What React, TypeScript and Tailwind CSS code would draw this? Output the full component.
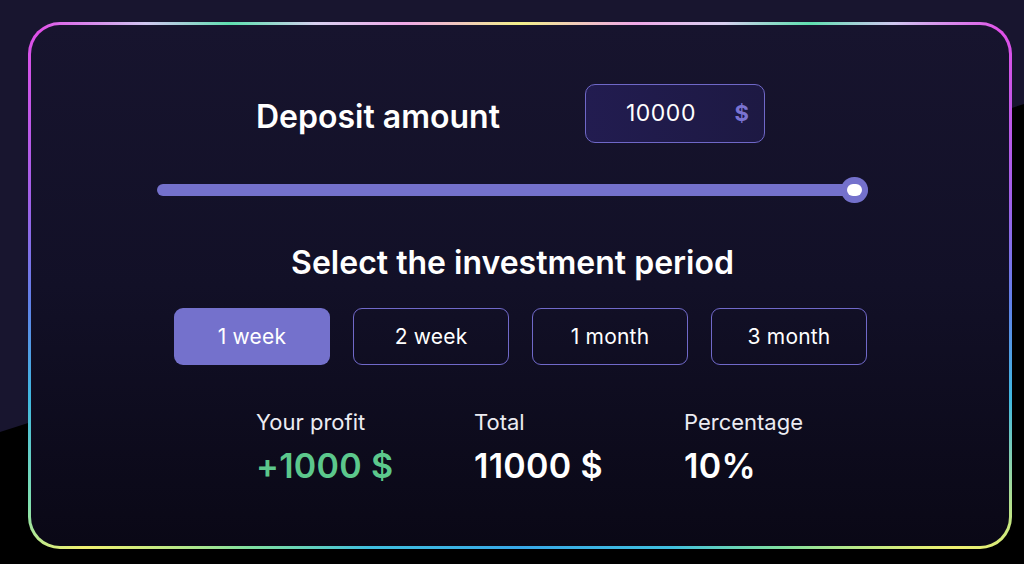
import { useState } from 'react';

// Periods offered by the calculator
const periods = ['1 week', '2 week', '1 month', '3 month'];

const font = "font-['Inter','Noto_Sans',sans-serif]";

export default function App() {
  const [active, setActive] = useState(0);

  return (
    <div className={`relative w-[1024px] h-[564px] overflow-hidden bg-[#18152f] ${font}`}>
      {/* dark backdrop shape behind the card */}
      <div className="absolute inset-0 bg-black [clip-path:polygon(0_432px,100%_104px,100%_100%,0_100%)]" />

      <div className="relative pt-[22px] pl-[28px]">
        <div className="w-[984px] h-[527px] p-[3px] rounded-[32px] bg-[conic-gradient(from_0deg_at_50%_50%,#f2f08a_0deg,#f0a8e8_24deg,#d8d0f0_38deg,#5fe0b0_48deg,#d0c8f0_55deg,#e050e8_62deg,#a060e8_80deg,#6080e8_92deg,#40b8e0_103deg,#c8e880_116deg,#f0f070_121deg,#80e0a0_135deg,#40c0e0_150deg,#38a8e8_180deg,#40c0e0_210deg,#80e0a0_226deg,#f0f070_239deg,#80e0b0_246deg,#40b8e0_257deg,#6080e8_268deg,#a060e8_280deg,#e050e8_298deg,#d0c8f0_305deg,#5fe0b0_312deg,#d8d0f0_322deg,#f0a8e8_336deg,#f2f08a_360deg)]">
          <div className="w-full h-full rounded-[29px] bg-[linear-gradient(180deg,#17142e_0%,#121027_50%,#0a0816_100%)] pt-[59px] pl-[126px]">
            <div className="w-[711px] flex flex-col">
              {/* deposit */}
              <div className="flex items-center pl-[99px]">
                <div className="w-[329px] pt-[6px] text-[32px] leading-[38px] font-semibold text-white">
                  Deposit amount
                </div>
                <div className="w-[180px] h-[59px] rounded-[10px] border-[1.5px] border-[#6f68c8] bg-[linear-gradient(90deg,#221c50,#1d1943)] flex items-center pl-[40px] pr-[15px]">
                  <span className="flex-1 text-[23px] tracking-[0.5px] text-white">10000</span>
                  <span className="text-[22px] font-bold text-[#7a73d2]">$</span>
                </div>
              </div>

              {/* slider */}
              <div className="relative mt-[34px] h-[26px] flex items-center">
                <div className="w-full h-[12px] rounded-full bg-[#7471cc]" />
                <div className="absolute right-0 top-0 w-[27px] h-[26px] rounded-full bg-[#7471cc] flex items-center justify-center">
                  <div className="w-[15px] h-[12px] rounded-full bg-white" />
                </div>
              </div>

              <div className="mt-[41px] text-center text-[32px] leading-[38px] font-semibold text-white">
                Select the investment period
              </div>

              {/* periods */}
              <div className="mt-[26px] pl-[17px] flex gap-[23px]">
                {periods.map((p, i) => (
                  <button
                    key={p}
                    onClick={() => setActive(i)}
                    className={
                      i === active
                        ? 'w-[156px] h-[57px] rounded-[9px] bg-[#7471cc] text-white text-[21px] tracking-[0.2px]'
                        : 'w-[156px] h-[57px] rounded-[9px] border-[1.5px] border-[#7069c9] text-white text-[21px] tracking-[0.2px]'
                    }
                  >
                    {p}
                  </button>
                ))}
              </div>

              {/* results */}
              <div className="mt-[44px] pl-[99px] flex">
                <div className="w-[218px] flex flex-col">
                  <span className="text-[22px] leading-[27px] text-[#ececf2]">Your profit</span>
                  <span className="mt-[10px] text-[34px] leading-[40px] font-semibold text-[#5cc88c] tracking-[0.3px]">+1000 $</span>
                </div>
                <div className="w-[210px] flex flex-col">
                  <span className="text-[22px] leading-[27px] text-[#ececf2]">Total</span>
                  <span className="mt-[10px] text-[34px] leading-[40px] font-semibold text-white tracking-[0.3px]">11000 $</span>
                </div>
                <div className="flex flex-col">
                  <span className="text-[22px] leading-[27px] text-[#ececf2]">Percentage</span>
                  <span className="mt-[10px] text-[34px] leading-[40px] font-semibold text-white tracking-[0.3px]">10%</span>
                </div>
              </div>
            </div>
          </div>
        </div>
      </div>
    </div>
  );
}
